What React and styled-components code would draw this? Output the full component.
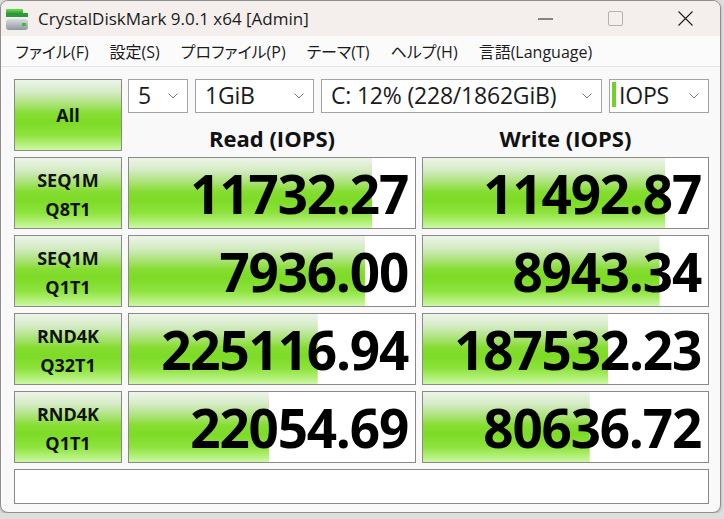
import React from "react";
import styled, { createGlobalStyle } from "styled-components";

const GlobalStyle = createGlobalStyle`
html, body {
  margin: 0;
  padding: 0;
  background: #dedede;
}
* {
  box-sizing: border-box;
}
`;

const UI_FONT = `"Open Sans", "Noto Sans CJK JP", sans-serif`;

const greenGradient = `linear-gradient(to bottom,
  #eef4ea 0%,
  #d3ebc2 18%,
  #a6e270 36%,
  #86dd31 48%,
  #7ddb26 60%,
  #8de33c 78%,
  #b3f07a 92%,
  #cdf8a6 100%)`;

const Window = styled.div`
width: 721px;
height: 513px;
border: 1px solid #8f8f8f;
border-radius: 8px;
overflow: hidden;
display: flex;
flex-direction: column;
background-color: #f9f9f9;
box-shadow: 0 1px 3px rgba(0, 0, 0, 0.25);
font-family: ${UI_FONT};
color: #1b1b1b;
`;

const TitleBar = styled.div`
height: 35px;
display: flex;
align-items: center;
background-color: #f4efed;
flex-shrink: 0;
`;

const AppIcon = styled.svg`
width: 24px;
height: 24px;
margin-left: 4px;
flex-shrink: 0;
`;

const Title = styled.div`
margin-left: 9px;
font-size: 17px;
white-space: nowrap;
flex: 1;
`;

const CaptionButton = styled.div`
width: 70px;
height: 100%;
display: flex;
align-items: center;
justify-content: center;
`;

const MenuBar = styled.div`
height: 31px;
display: flex;
align-items: center;
padding-left: 4px;
background-color: #fbfbfb;
border-bottom: 1px solid #e3e3e3;
flex-shrink: 0;
`;

const MenuItem = styled.div`
padding: 0 10.5px;
font-size: 16px;
white-space: nowrap;
font-feature-settings: "palt";
`;

const Content = styled.div`
flex: 1;
padding: 12px 0 0 13px;
display: grid;
grid-template-columns: 108px 288px 287px;
grid-template-rows: 34px 32px repeat(4, 72px) 35px;
gap: 6px;
`;

const AllButton = styled.div`
grid-column: 1;
grid-row: 1 / 3;
display: flex;
align-items: center;
justify-content: center;
border: 1px solid #8a8a8a;
background: ${greenGradient};
font-weight: 700;
font-size: 18px;
color: #111;
`;

const SelectRow = styled.div`
grid-column: 2 / 4;
grid-row: 1;
display: flex;
gap: 7px;
`;

const Select = styled.div`
width: ${(p) => p.$width}px;
height: 34px;
display: flex;
align-items: center;
border: 1px solid #a4a4a4;
background-color: #ffffff;
font-size: 23px;
letter-spacing: -0.2px;
`;

const SelectAccent = styled.span`
width: 4px;
height: 25px;
margin-left: 2px;
margin-top: -3px;
background-color: #6fd32b;
flex-shrink: 0;
`;

const SelectText = styled.span`
flex: 1;
padding-left: ${(p) => (p.$accent ? 3 : 9)}px;
white-space: nowrap;
line-height: 1;
margin-top: -2px;
`;

const Chevron = styled.svg`
width: 10px;
height: 6px;
margin-right: 9px;
flex-shrink: 0;
`;

const Header = styled.div`
grid-row: 2;
grid-column: ${(p) => p.$col};
align-self: end;
text-align: center;
font-weight: 700;
font-size: 22px;
line-height: 1;
padding-bottom: 2px;
color: #111;
`;

const TestLabel = styled.div`
display: flex;
flex-direction: column;
align-items: center;
justify-content: center;
padding-top: 3px;
border: 1px solid #8a8a8a;
background: ${greenGradient};
font-weight: 700;
font-size: 18px;
line-height: 29px;
color: #111;
`;

const ResultCell = styled.div`
display: flex;
align-items: center;
justify-content: flex-end;
padding-right: 7px;
border: 1px solid #8a8a8a;
background: ${greenGradient} no-repeat, #ffffff;
background-size: ${(p) => p.$fill}% 100%;
font-weight: 700;
font-size: 53px;
letter-spacing: -1.2px;
line-height: 1;
color: #000;
`;

const CommentBox = styled.div`
grid-column: 1 / 4;
border: 1px solid #8a8a8a;
background-color: #ffffff;
`;

const selects = [
  { value: "5", width: 60 },
  { value: "1GiB", width: 119 },
  { value: "C: 12% (228/1862GiB)", width: 281 },
  { value: "IOPS", width: 100, accent: true },
];

const results = [
  { top: "SEQ1M", bottom: "Q8T1", read: "11732.27", readFill: 85, write: "11492.87", writeFill: 85 },
  { top: "SEQ1M", bottom: "Q1T1", read: "7936.00", readFill: 82.5, write: "8943.34", writeFill: 83 },
  { top: "RND4K", bottom: "Q32T1", read: "225116.94", readFill: 66, write: "187532.23", writeFill: 65 },
  { top: "RND4K", bottom: "Q1T1", read: "22054.69", readFill: 49, write: "80636.72", writeFill: 58.5 },
];

const menus = ["ファイル(F)", "設定(S)", "プロファイル(P)", "テーマ(T)", "ヘルプ(H)", "言語(Language)"];

function DiskIcon() {
  return (
    <AppIcon viewBox="0 0 24 24">
      <defs>
        <linearGradient id="lid" x1="0" y1="0" x2="0" y2="1">
          <stop offset="0" stopColor="#6ee04a" />
          <stop offset="1" stopColor="#2fa83a" />
        </linearGradient>
        <linearGradient id="body" x1="0" y1="0" x2="0" y2="1">
          <stop offset="0" stopColor="#d8dde0" />
          <stop offset="1" stopColor="#8e979c" />
        </linearGradient>
      </defs>
      <rect x="1" y="2" width="17" height="4" fill="url(#lid)" />
      <rect x="1" y="6" width="22" height="4" fill="#2c9a3a" />
      <rect x="1" y="12" width="22" height="11" rx="3" fill="url(#body)" />
      <rect x="17" y="16" width="4" height="3" fill="#3dbb3a" />
    </AppIcon>
  );
}

function ChevronIcon() {
  return (
    <Chevron viewBox="0 0 10 6">
      <path d="M0.5 0.5 L5 5 L9.5 0.5" fill="none" stroke="#7a7a7a" strokeWidth="1" />
    </Chevron>
  );
}

export default function App() {
  return (
    <>
      <GlobalStyle />
      <Window>
        <TitleBar>
          <DiskIcon />
          <Title>CrystalDiskMark 9.0.1 x64 [Admin]</Title>
          <CaptionButton>
            <svg width="15" height="2" viewBox="0 0 15 2">
              <rect x="0" y="0.5" width="15" height="1" fill="#1b1b1b" />
            </svg>
          </CaptionButton>
          <CaptionButton>
            <svg width="15" height="15" viewBox="0 0 15 15">
              <rect x="0.5" y="0.5" width="14" height="14" rx="1.5" fill="none" stroke="#b4b1b0" />
            </svg>
          </CaptionButton>
          <CaptionButton>
            <svg width="15" height="15" viewBox="0 0 15 15">
              <path d="M0.5 0.5 L14.5 14.5 M14.5 0.5 L0.5 14.5" stroke="#1b1b1b" strokeWidth="1.1" />
            </svg>
          </CaptionButton>
        </TitleBar>
        <MenuBar>
          {menus.map((m) => (
            <MenuItem key={m}>{m}</MenuItem>
          ))}
        </MenuBar>
        <Content>
          <AllButton>All</AllButton>
          <SelectRow>
            {selects.map((s) => (
              <Select key={s.value} $width={s.width}>
                {s.accent && <SelectAccent />}
                <SelectText $accent={s.accent}>{s.value}</SelectText>
                <ChevronIcon />
              </Select>
            ))}
          </SelectRow>
          <Header $col={2}>Read (IOPS)</Header>
          <Header $col={3}>Write (IOPS)</Header>
          {results.map((r) => (
            <React.Fragment key={r.read}>
              <TestLabel>
                <span>{r.top}</span>
                <span>{r.bottom}</span>
              </TestLabel>
              <ResultCell $fill={r.readFill}>{r.read}</ResultCell>
              <ResultCell $fill={r.writeFill}>{r.write}</ResultCell>
            </React.Fragment>
          ))}
          <CommentBox />
        </Content>
      </Window>
    </>
  );
}
